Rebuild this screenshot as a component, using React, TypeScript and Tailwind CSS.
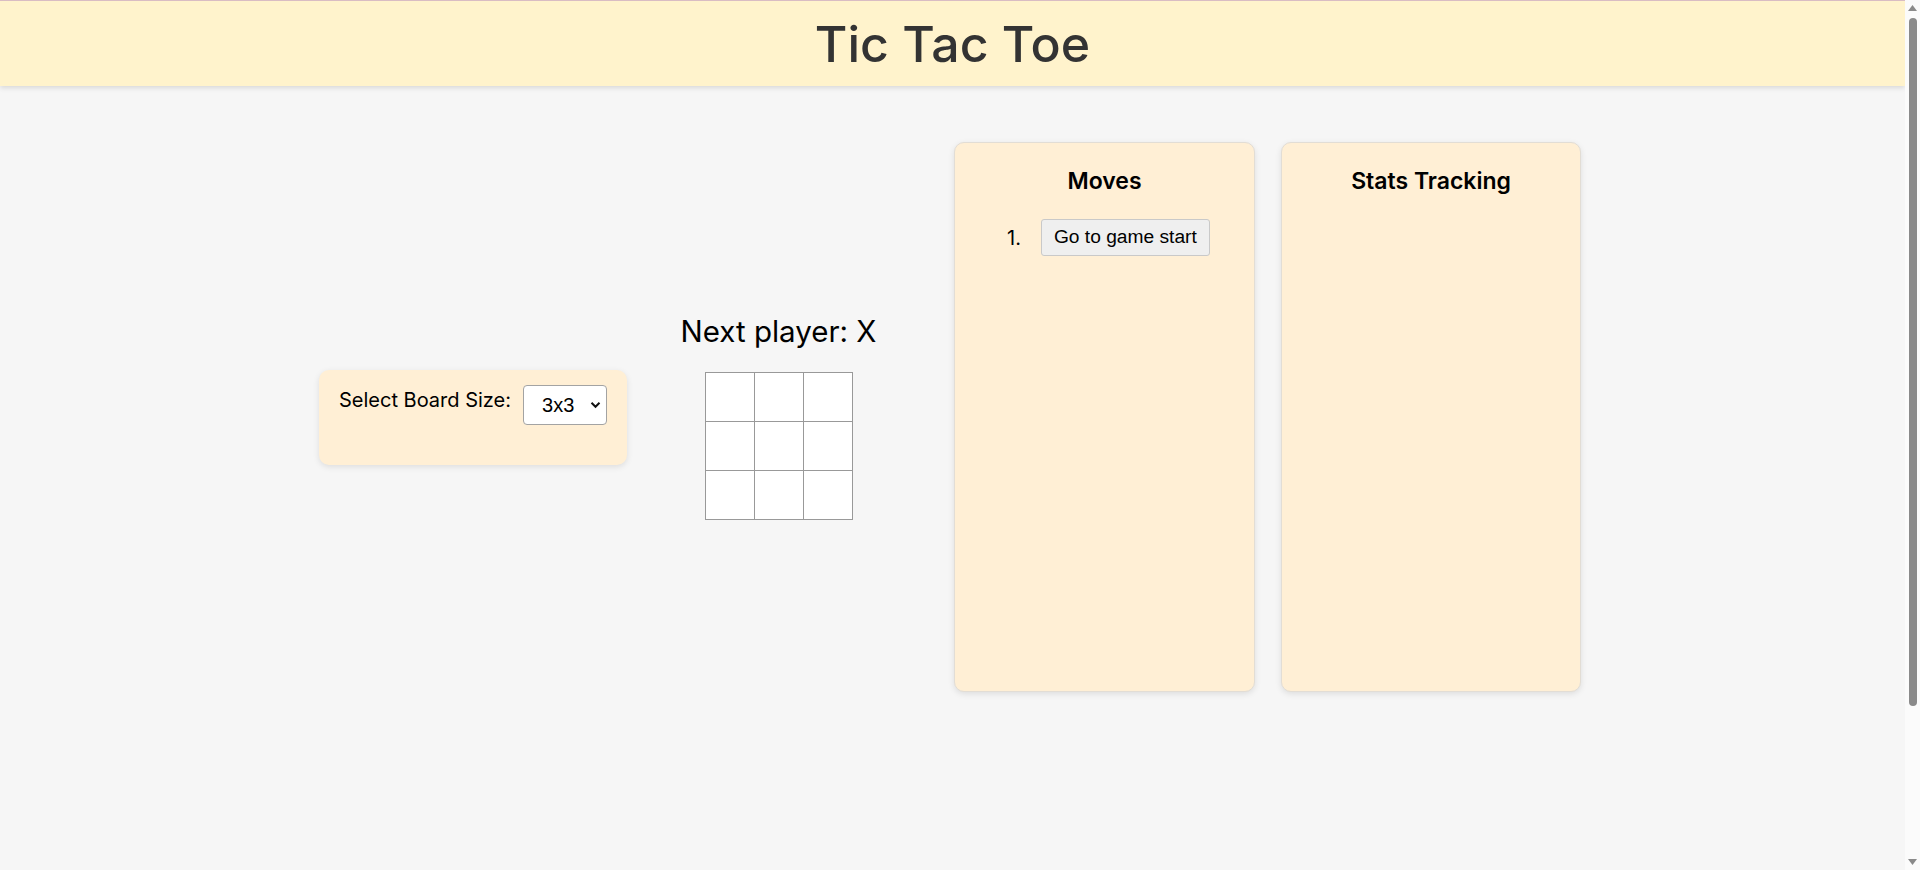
import { useState } from "react";

const SIZES = ["3x3", "4x4", "5x5"];

function Board({ n }: { n: number }) {
  const cells = Array.from({ length: n * n }, (_, i) => i);
  return (
    <div
      className="grid border-l border-t border-[#999] bg-white"
      style={{ gridTemplateColumns: `repeat(${n}, 49px)` }}
    >
      {cells.map((i) => (
        <button
          key={i}
          type="button"
          className="h-[49px] w-[49px] border-b border-r border-[#999] bg-white"
        />
      ))}
    </div>
  );
}

// the reference shows a classic window scrollbar on the right
function FakeScrollbar() {
  return (
    <div className="fixed right-0 top-0 flex h-screen w-[15px] flex-col items-center bg-[#fbfbfb]">
      <svg className="mt-[5px]" width="9" height="6" viewBox="0 0 9 6">
        <path d="M4.5 0 9 6H0z" fill="#8a8a8a" />
      </svg>
      <div className="mt-[7px] h-[688px] w-[8px] rounded-full bg-[#8a8a8a]" />
      <div className="flex-1" />
      <svg className="mb-[5px]" width="9" height="6" viewBox="0 0 9 6">
        <path d="M0 0h9L4.5 6z" fill="#8a8a8a" />
      </svg>
    </div>
  );
}

export default function App() {
  const [size, setSize] = useState("3x3");
  const n = parseInt(size, 10);

  return (
    <div className="min-h-[1066px] bg-[#f6f6f6] pr-[15px] font-['Inter','Noto_Sans',sans-serif] text-black">
      <header className="flex h-[86px] items-center justify-center border-t border-[#d9bcc3] bg-[#fff3cc] shadow-[0_2px_5px_rgba(0,0,0,0.12)]">
        <h1 className="text-[50px] font-medium leading-none text-[#333]">Tic Tac Toe</h1>
      </header>

      <main className="flex items-center justify-center pr-[5px] pt-[56px]">
        <div className="flex h-[95px] w-[308px] shrink-0 items-start gap-[12px] rounded-[10px] bg-[#ffefd5] pl-[20px] pt-[15px] shadow-[0_2px_6px_rgba(0,0,0,0.1)]">
          <label htmlFor="board-size" className="mt-[3px] whitespace-nowrap text-[20px] leading-[24px]">
            Select Board Size:
          </label>
          <div className="relative">
            <select
              id="board-size"
              value={size}
              onChange={(e) => setSize(e.target.value)}
              className="h-[40px] w-[84px] appearance-none rounded-[4px] border border-[#a3a3a3] bg-white pl-[18px] font-['Liberation_Sans',Arial,sans-serif] text-[20px] outline-none"
            >
              {SIZES.map((s) => (
                <option key={s} value={s}>
                  {s}
                </option>
              ))}
            </select>
            <svg
              className="pointer-events-none absolute right-[6px] top-[16px]"
              width="11"
              height="8"
              viewBox="0 0 11 8"
              fill="none"
            >
              <path d="M1.5 1.8 5.5 5.8 9.5 1.8" stroke="#111" strokeWidth="2" />
            </svg>
          </div>
        </div>

        <div className="ml-[53px] mr-[77px] flex w-[197px] flex-col items-center">
          <div className="whitespace-nowrap text-[29.5px] leading-[34px]">Next player: X</div>
          <div className="mt-[24px]">
            <Board n={n} />
          </div>
        </div>

        <section className="h-[550px] w-[301px] rounded-[10px] border border-[#e2ddd5] bg-[#ffefd5] pt-[24px] shadow-[0_2px_6px_rgba(0,0,0,0.1)]">
          <h2 className="text-center text-[23px] font-semibold leading-[29px]">Moves</h2>
          <ol className="mt-[23px] pl-[52px]">
            <li className="flex items-center gap-[20px]">
              <span className="text-[20px]">1.</span>
              <button
                type="button"
                className="h-[37px] rounded-[3px] border border-[#c9c9c9] bg-[#efefef] px-[12px] font-['Liberation_Sans',Arial,sans-serif] text-[19.2px]"
              >
                Go to game start
              </button>
            </li>
          </ol>
        </section>

        <section className="ml-[26px] h-[550px] w-[300px] rounded-[10px] border border-[#e2ddd5] bg-[#ffefd5] pt-[24px] shadow-[0_2px_6px_rgba(0,0,0,0.1)]">
          <h2 className="text-center text-[23px] font-semibold leading-[29px]">Stats Tracking</h2>
        </section>
      </main>

      <FakeScrollbar />
    </div>
  );
}
